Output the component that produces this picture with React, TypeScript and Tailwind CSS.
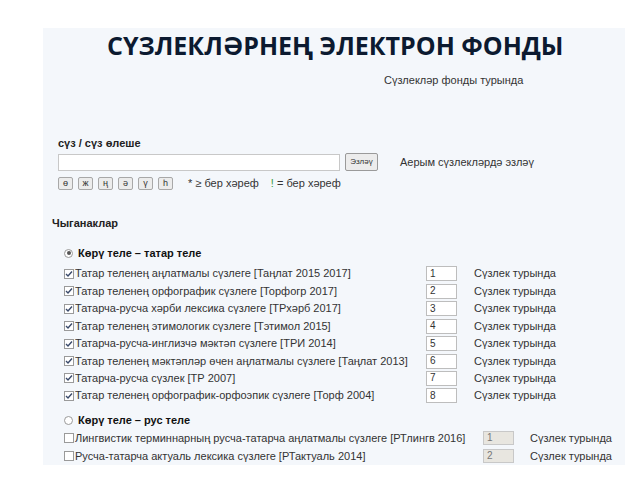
import React from "react";

const tatRows = [
  "Татар теленең аңлатмалы сүзлеге [Таңлат 2015 2017]",
  "Татар теленең орфографик сүзлеге [Торфогр 2017]",
  "Татарча-русча хәрби лексика сүзлеге [ТРхәрб 2017]",
  "Татар теленең этимологик сүзлеге [Тэтимол 2015]",
  "Татарча-русча-инглизчә мәктәп сүзлеге [ТРИ 2014]",
  "Татар теленең мәктәпләр өчен аңлатмалы сүзлеге [Таңлат 2013]",
  "Татарча-русча сүзлек [ТР 2007]",
  "Татар теленең орфографик-орфоэпик сүзлеге [Торф 2004]",
];

const rusRows = [
  "Лингвистик терминнарның русча-татарча аңлатмалы сүзлеге [РТлингв 2016]",
  "Русча-татарча актуаль лексика сүзлеге [РТактуаль 2014]",
];

function Check({ on }: { on: boolean }) {
  return (
    <span className="inline-flex w-[10px] h-[10px] border border-[#9a9a9a] bg-white items-center justify-center mr-[1px] shrink-0">
      {on && (
        <svg width="8" height="8" viewBox="0 0 8 8">
          <path d="M1 4 L3 6 L7 1.5" stroke="#3a4a6a" strokeWidth="1.4" fill="none" />
        </svg>
      )}
    </span>
  );
}

function Radio({ on }: { on: boolean }) {
  return (
    <span className="inline-flex w-[9px] h-[9px] rounded-full border border-[#9a9a9a] bg-white items-center justify-center mr-[5px] shrink-0">
      {on && <span className="w-[4px] h-[4px] rounded-full bg-[#555]" />}
    </span>
  );
}

export default function App() {
  const font = { fontFamily: '"Liberation Sans", Arial, sans-serif' };
  return (
    <div className="w-[640px] h-[480px] bg-white overflow-hidden" style={font}>
      <div className="ml-[43px] mt-[28px] w-[582px] h-[437px] bg-[#f4f7fb] flex flex-col text-[11px] text-[#333] leading-none">
        <div
          className="h-[36px] flex items-center pl-[64px] text-[25px] font-bold text-[#0c1a30]"
          style={{ fontFamily: '"Open Sans", "Noto Sans", sans-serif' }}
        >
          СҮЗЛЕКЛӘРНЕҢ ЭЛЕКТРОН ФОНДЫ
        </div>
        <div className="mt-[13px] pl-[341px] h-[12px]">Сүзлекләр фонды турында</div>
        <div className="mt-[51px] pl-[15px] font-bold text-[#222] h-[12px]">сүз / сүз өлеше</div>
        <div className="mt-[4px] pl-[15px] flex items-center h-[18px]">
          <div className="w-[282px] h-[17px] bg-white border border-[#c8c8c8]" />
          <div className="ml-[5px] w-[33px] h-[18px] border border-[#9a9a9a] rounded-[2px] bg-[#ececec] text-[8px] flex items-center justify-center text-[#333]">
            Эзләү
          </div>
          <div className="ml-[22px] text-[11px]">Аерым сүзлекләрдә эзләү</div>
        </div>
        <div className="mt-[6px] pl-[15px] flex items-center h-[14px]">
          {["ө", "ж", "ң", "ә", "ү", "һ"].map((c) => (
            <span
              key={c}
              className="w-[15px] h-[13px] mr-[5px] border border-[#a8a8a8] rounded-[2px] bg-[#ececec] text-[9px] flex items-center justify-center text-[#333]"
            >
              {c}
            </span>
          ))}
          <span className="ml-[10px]">* ≥ бер хәреф</span>
          <span className="ml-[12px]">
            <span className="text-[#3a9a3a]">!</span> = бер хәреф
          </span>
        </div>
        <div className="mt-[28px] pl-[9px] font-bold text-[#222] h-[12px]">Чыганаклар</div>
        <div className="mt-[18px] pl-[21px] flex items-center font-bold text-[#111] h-[12px]">
          <Radio on={true} />
          Көрү теле – татар теле
        </div>
        <div className="mt-[6px] pl-[21px] flex flex-col">
          {tatRows.map((r, i) => (
            <div key={r} className="h-[17.45px] flex items-center">
              <div className="w-[362px] flex items-center">
                <Check on={true} />
                <span>{r}</span>
              </div>
              <div className="w-[31px] h-[15px] bg-white border border-[#bdbdbd] text-[10px] pl-[3px] flex items-center">
                {i + 1}
              </div>
              <span className="ml-[17px]">Сүзлек турында</span>
            </div>
          ))}
        </div>
        <div className="mt-[10px] pl-[21px] flex items-center font-bold text-[#111] h-[12px]">
          <Radio on={false} />
          Көрү теле – рус теле
        </div>
        <div className="mt-[3px] pl-[21px] flex flex-col">
          {rusRows.map((r, i) => (
            <div key={r} className="h-[18px] flex items-center">
              <div className="w-[419px] flex items-center">
                <Check on={false} />
                <span>{r}</span>
              </div>
              <div className="w-[31px] h-[14px] bg-[#e8e6e0] border border-[#c8c8c8] text-[10px] pl-[3px] flex items-center text-[#777]">
                {i + 1}
              </div>
              <span className="ml-[16px]">Сүзлек турында</span>
            </div>
          ))}
        </div>
      </div>
    </div>
  );
}
